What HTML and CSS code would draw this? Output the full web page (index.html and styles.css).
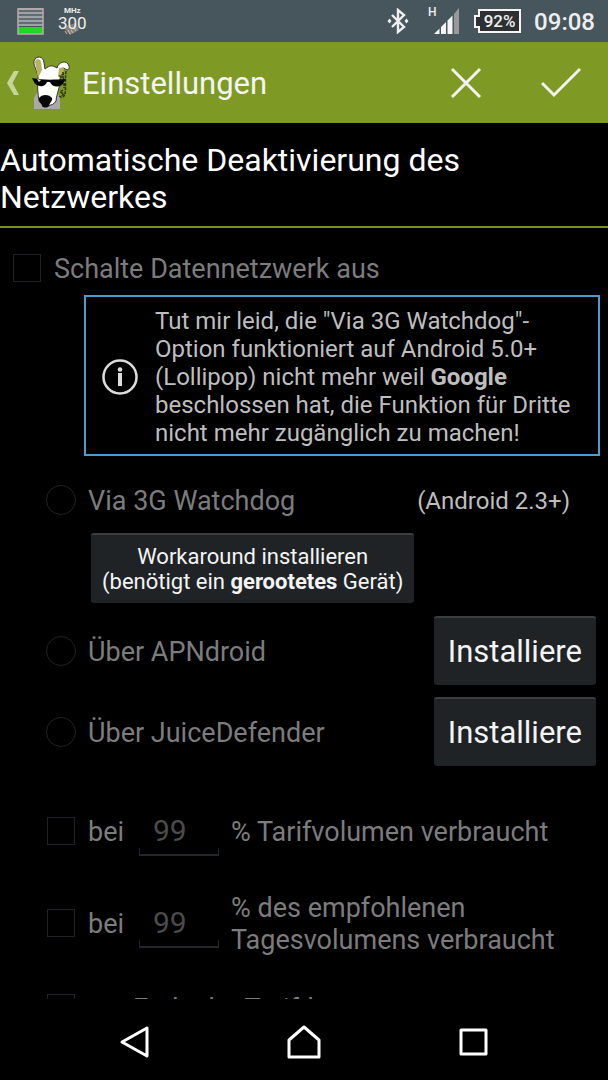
FILE: index.html
```html
<!DOCTYPE html>
<html lang="de">
<head>
<meta charset="utf-8">
<meta name="viewport" content="width=device-width, initial-scale=1">
<title>Einstellungen</title>
<link rel="stylesheet" href="styles.css">
</head>
<body>
<div class="status-bar">
  <svg class="status-icon" width="27" height="27" viewBox="0 0 27 27" aria-hidden="true">
    <path d="M1 1h25M1 5h25M1 9h25M1 13h25M1 17h25" stroke="#b9bcbe" stroke-width="1.6"/>
    <path d="M1 3h25M1 7h25M1 11h25M1 15h25" stroke="#6b7478" stroke-width="1.4"/>
    <rect x="1" y="19" width="25" height="7" fill="#1fd91f"/>
    <rect x="1" y="1" width="25" height="25" fill="none" stroke="#b5a9a9" stroke-width="1.6"/>
  </svg>
  <div class="cpu">
    <svg class="cpu-chip" width="20" height="14" viewBox="0 0 20 14" aria-hidden="true">
      <path d="M2 5 15 1l3 7-9 5z" fill="#85827c"/>
      <path d="M4 9l2 3M7 8l2 4M10 8l2 3M13 6l2 3" stroke="#c4bfb4"/>
    </svg>
    <span class="cpu-unit">MHz</span>
    <span class="cpu-value">300</span>
  </div>
  <div class="status-right">
    <svg width="22" height="26" viewBox="0 0 22 26" aria-hidden="true">
      <path d="m5 7 12 12-6 5V2l6 5L5 19" fill="none" stroke="#eee" stroke-width="2.400"/>
      <path d="m2.500 10.500 2 2.500-2 2.500L.5 13zM19.500 10.500l2 2.500-2 2.500-2-2.500z" fill="#eee"/>
    </svg>
    <div class="signal">
      <span class="signal-type">H</span>
      <svg width="26" height="26" viewBox="0 0 26 26" aria-hidden="true">
        <path d="M0 26 5.500 20.500V26zM7 19l5-5v12H7zM13.500 12.500l5-5V26h-5z" fill="#f4f4f4"/>
        <path d="m20 6 5-6v26h-5z" fill="#999"/>
      </svg>
    </div>
    <div class="battery">
      <svg width="47" height="24" viewBox="0 0 47 24" aria-hidden="true">
        <path d="M5 1h41v22H5v-5H1V7h4z" fill="#2c3033" stroke="#f4f4f4" stroke-width="2"/>
      </svg>
      <span class="battery-level">92%</span>
    </div>
    <time class="clock">09:08</time>
  </div>
</div>

<header class="action-bar">
  <button class="up" type="button" aria-label="Zurück">
    <svg width="12" height="24" viewBox="0 0 12 24" aria-hidden="true"><path d="M7 0h5L5.500 12 12 24H7L0 12z" fill="#c7d49a"/></svg>
    <svg class="dog" width="38" height="54" viewBox="0 0 38 54" aria-hidden="true">
      <path d="M2 53V42l5-9h15l6 8v12z" fill="#a9a9a9"/>
      <path d="M6 24C7 16 1 11 2 5 4-1 12 0 12 7l1 6c5-4 7-4 12-1 1-6 10-9 12-2 1 4-2 5-5 2-3 3-4 7-4 12 0 8-3 12-4 21-3 6-14 6-17 0C6 37 5 32 6 24z" fill="#fff" stroke="#333"/>
      <path d="M3 6c1-4 5-4 6 0l1 8-4 8zM27 12l5-1-1 9-5 1z" fill="#b5b266"/>
      <path d="M31 16v6M32 18l-4 2 4 3M32 27v5M31 34l-3 2 4 2-4 3M34 15c-1 9 0 17-1 23-1 4-4 4-6 2" fill="none" stroke="#313714" stroke-width="1.500" stroke-dasharray="3 1"/>
      <path d="M0 22c10 2 20 2 34 1l-2 3c-2 6-12 6-14 0h-3C13 32 4 31 2 26z" fill="#050505"/>
      <path d="m5 23 4 1-2 2z" fill="#ddd"/>
      <path d="M7 42c3-4 10-4 13 0 1 3-3 5-3 8-2 2-5 2-7 0 0-3-4-4-3-8z" fill="#080808"/>
    </svg>
  </button>
  <h1 class="title">Einstellungen</h1>
  <button class="action" type="button" aria-label="Abbrechen">
    <svg width="32" height="32" viewBox="0 0 32 32" aria-hidden="true"><path d="m2 2 28 28M30 2 2 30" stroke="#f2f2f2" stroke-width="3"/></svg>
  </button>
  <button class="action" type="button" aria-label="Speichern">
    <svg width="40" height="32" viewBox="0 0 40 32" aria-hidden="true"><path d="m1 16 12 12L39 2" fill="none" stroke="#f2f2f2" stroke-width="3"/></svg>
  </button>
</header>

<main class="content">
  <h2 class="section-title">Automatische Deaktivierung des Netzwerkes</h2>
  <div class="row row-top">
    <input class="check" type="checkbox" id="data-off" disabled>
    <label for="data-off">Schalte Datennetzwerk aus</label>
  </div>
  <div class="notice">
    <svg class="info" width="36" height="36" viewBox="0 0 36 36" aria-hidden="true">
      <circle cx="18" cy="18" r="16.500" fill="none" stroke="#ddd" stroke-width="2.500"/>
      <path d="M18 14v13" stroke="#ddd" stroke-width="4"/><circle cx="18" cy="10.500" r="2.300" fill="#ddd"/>
    </svg>
    <p class="notice-text">Tut mir leid, die "Via 3G Watchdog"-Option funktioniert auf Android 5.0+ (Lollipop) nicht mehr weil <b>Google</b> beschlossen hat, die Funktion für Dritte nicht mehr zugänglich zu machen!</p>
  </div>
  <div class="row option option-first">
    <input class="radio" type="radio" name="via" id="via-3g" disabled>
    <label for="via-3g">Via 3G Watchdog</label>
    <span class="hint">(Android 2.3+)</span>
  </div>
  <button class="button workaround" type="button">Workaround installieren<br>(benötigt ein <b>gerootetes</b> Gerät)</button>
  <div class="row option">
    <input class="radio" type="radio" name="via" id="via-apn" disabled>
    <label for="via-apn">Über APNdroid</label>
    <button class="button install" type="button">Installiere</button>
  </div>
  <div class="row option">
    <input class="radio" type="radio" name="via" id="via-juice" disabled>
    <label for="via-juice">Über JuiceDefender</label>
    <button class="button install" type="button">Installiere</button>
  </div>
  <div class="limits">
    <div class="row limit">
      <input class="check" type="checkbox" id="plan" disabled>
      <label class="at" for="plan">bei</label>
      <input class="number" type="text" id="plan-value" value="99" disabled>
      <label for="plan-value">% Tarifvolumen verbraucht</label>
    </div>
    <div class="row limit">
      <input class="check" type="checkbox" id="day" disabled>
      <label class="at" for="day">bei</label>
      <input class="number" type="text" id="day-value" value="99" disabled>
      <label for="day-value">% des empfohlenen Tagesvolumens verbraucht</label>
    </div>
    <div class="row limit limit-last">
      <input class="check" type="checkbox" id="end" disabled>
      <label for="end">am Ende der Tarifdauer</label>
    </div>
  </div>
</main>

<nav class="nav-bar">
  <button class="nav-button" type="button" aria-label="Zurück">
    <svg width="34" height="34" viewBox="0 0 34 34" aria-hidden="true"><path d="M29 3v28L4 17z" fill="none" stroke="#fff" stroke-width="3" stroke-linejoin="round"/></svg>
  </button>
  <button class="nav-button" type="button" aria-label="Startseite">
    <svg width="34" height="34" viewBox="0 0 34 34" aria-hidden="true"><path d="M2 32V15L17 2l15 13v17z" fill="none" stroke="#fff" stroke-width="3" stroke-linejoin="round"/></svg>
  </button>
  <button class="nav-button" type="button" aria-label="Übersicht">
    <svg width="34" height="34" viewBox="0 0 34 34" aria-hidden="true"><rect x="5" y="5" width="25" height="24" fill="none" stroke="#fff" stroke-width="3" stroke-linejoin="round"/></svg>
  </button>
</nav>
</body>
</html>
```

FILE: styles.css
```css
* {
  box-sizing: border-box;
}

body {
  margin: 0;
  height: 100vh;
  display: flex;
  flex-direction: column;
  overflow: hidden;
  background: #000;
  color: #7c7c7c;
  font: 27px/32px Roboto, sans-serif;
}

button {
  border: 0;
  padding: 0;
  background: none;
  font: inherit;
}

svg {
  display: block;
}

.status-bar {
  flex: none;
  height: 42px;
  padding: 0 13px 0 17px;
  display: flex;
  align-items: center;
  gap: 14px;
  background: #47565d;
  color: #eee;
}

.cpu {
  position: relative;
  padding-bottom: 5px;
  display: flex;
  flex-direction: column;
  align-items: center;
}

.cpu-chip {
  position: absolute;
  right: 6px;
  bottom: 0;
}

.cpu-unit {
  font-size: 8px;
  line-height: 8px;
  font-weight: 700;
}

.cpu-value {
  position: relative;
  font-size: 17px;
  line-height: 16px;
}

.status-right {
  margin-left: auto;
  display: flex;
  align-items: center;
}

.signal {
  display: flex;
  align-items: flex-end;
  margin-left: 19px;
}

.signal-type {
  width: 6px;
  align-self: flex-start;
  font-size: 12px;
  line-height: 8px;
  font-weight: 500;
}

.battery {
  position: relative;
  margin: 0 13px;
}

.battery-level {
  position: absolute;
  inset: 0 0 0 4px;
  text-align: center;
  font-size: 17px;
  line-height: 24px;
  font-weight: 500;
}

.signal + .battery {
  margin-left: 14px;
}

.clock {
  padding-top: 2px;
  font-size: 24px;
  font-weight: 500;
}

.action-bar {
  flex: none;
  height: 81px;
  padding-left: 7px;
  display: flex;
  align-items: center;
  background: #7f9a24;
}

.up {
  display: flex;
  align-items: center;
  gap: 13px;
}

.title {
  flex: 1;
  margin: 0;
  padding: 2px 0 0 12px;
  color: #f4f4f4;
  font-size: 31px;
  line-height: 36px;
  font-weight: 400;
}

.action {
  width: 95px;
  height: 81px;
  display: flex;
  align-items: center;
  justify-content: center;
}

.content {
  flex: 1;
  min-height: 0;
  overflow: hidden;
}

.section-title {
  margin: 0;
  padding: 19px 0 10px;
  border-bottom: 2px solid #75901c;
  color: #fff;
  font-size: 32px;
  line-height: 37px;
  font-weight: 400;
}

.row {
  display: flex;
  align-items: center;
}

.row label,
.hint {
  padding-top: 2px;
}

.row-top {
  padding: 23px 13px 10px;
  gap: 13px;
}

.check,
.radio {
  appearance: none;
  flex: none;
  margin: 0;
  width: 28px;
  height: 28px;
  border: 1px solid #1f2226;
}

.radio {
  width: 30px;
  height: 30px;
  border: 1px solid #222;
  border-radius: 50%;
}

.notice {
  margin: 0 8px 0 84px;
  padding: 10px 16px 7px;
  display: flex;
  align-items: center;
  gap: 17px;
  border: 2px solid #489ed2;
  color: #bebebe;
}

.info {
  flex: none;
}

.notice-text {
  margin: 0;
  font-size: 24px;
  line-height: 28px;
}

.option {
  padding: 0 12px 0 46px;
  margin-top: 12px;
  gap: 12px;
}

.option-first {
  margin-top: 27px;
  padding-right: 38px;
}

.hint {
  margin-left: auto;
  color: #bebebe;
  font-size: 24px;
}

.button {
  border-top: 2px solid #3b3e40;
  border-radius: 3px;
  background: #1f2326;
  color: #f4f4f4;
}

.workaround {
  margin: 16px 0 0 91px;
  padding: 9px 11px;
  font-size: 22px;
  line-height: 25px;
}

.workaround + .option {
  margin-top: 13px;
}

.install {
  margin-left: auto;
  padding: 15px 14px;
  font-size: 31px;
  line-height: 37px;
}

.limits {
  margin-top: 33px;
  padding: 0 46px 0 47px;
  display: grid;
  gap: 27px;
}

.limit {
  min-height: 64px;
  gap: 12px;
}

.limit-last {
  min-height: 50px;
}

.limit .check {
  margin-right: 1px;
}

.at {
  flex: none;
  width: 39px;
}

.number {
  flex: none;
  width: 80px;
  height: 50px;
  padding: 0 14px;
  border: solid #20262b;
  border-width: 0 0 2px;
  background: linear-gradient(#20262b, #20262b) left bottom / 1px 6px no-repeat,
    linear-gradient(#20262b, #20262b) right bottom / 1px 6px no-repeat;
  color: #4b4b4b;
  font: 30px/36px Roboto, sans-serif;
}

.nav-bar {
  flex: none;
  height: 81px;
  padding: 5px 50px 0;
  display: flex;
}

.nav-button {
  flex: 1;
  display: flex;
  align-items: center;
  justify-content: center;
}
```
